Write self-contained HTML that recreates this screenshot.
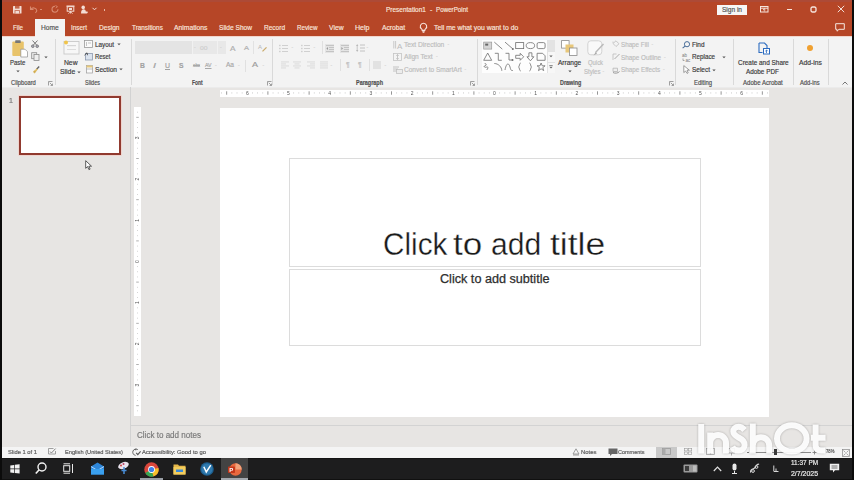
<!DOCTYPE html>
<html><head><meta charset="utf-8">
<style>
*{margin:0;padding:0;box-sizing:border-box}
html,body{width:854px;height:480px;overflow:hidden;background:#e7e5e3;font-family:"Liberation Sans",sans-serif}
.a{position:absolute;display:block}
.t{position:absolute;white-space:nowrap;line-height:1;transform-origin:0 50%;-webkit-text-stroke:0.18px currentColor}
svg{overflow:visible}
</style></head><body><div id="root" style="position:absolute;left:0;top:0;width:854px;height:480px;overflow:hidden;filter:blur(0.35px)">
<div class="a" style="left:0.00px;top:0.00px;width:854.00px;height:36.00px;background:#b64627;"></div>
<div class="a" style="left:0.00px;top:0.00px;width:854.00px;height:1.60px;background:#ad4a36;"></div>
<div class="a" style="left:35.00px;top:19.00px;width:30.00px;height:18.00px;background:#f3f3f3;"></div>
<div class="a" style="left:0.00px;top:36.00px;width:854.00px;height:50.50px;background:#f3f3f3;"></div>
<div class="a" style="left:0.00px;top:86.50px;width:854.00px;height:1.00px;background:#ebebeb;"></div>
<div class="a" style="left:0.00px;top:36.00px;width:35.00px;height:0.80px;background:#f1d6cd;"></div>
<div class="a" style="left:65.00px;top:36.00px;width:789.00px;height:0.80px;background:#f1d6cd;"></div>
<div class="t" style="left:13.00px;top:24.38px;font-size:7.00px;color:#f8e4dc;transform:scaleX(0.887);">File</div>
<div class="t" style="left:40.70px;top:24.38px;font-size:7.00px;color:#555;transform:scaleX(0.943);">Home</div>
<div class="t" style="left:71.00px;top:24.38px;font-size:7.00px;color:#f8e4dc;transform:scaleX(0.914);">Insert</div>
<div class="t" style="left:98.50px;top:24.38px;font-size:7.00px;color:#f8e4dc;transform:scaleX(0.941);">Design</div>
<div class="t" style="left:131.60px;top:24.38px;font-size:7.00px;color:#f8e4dc;transform:scaleX(0.907);">Transitions</div>
<div class="t" style="left:174.00px;top:24.38px;font-size:7.00px;color:#f8e4dc;transform:scaleX(0.967);">Animations</div>
<div class="t" style="left:219.00px;top:24.38px;font-size:7.00px;color:#f8e4dc;transform:scaleX(0.942);">Slide Show</div>
<div class="t" style="left:263.50px;top:24.38px;font-size:7.00px;color:#f8e4dc;transform:scaleX(0.931);">Record</div>
<div class="t" style="left:296.50px;top:24.38px;font-size:7.00px;color:#f8e4dc;transform:scaleX(0.893);">Review</div>
<div class="t" style="left:329.00px;top:24.38px;font-size:7.00px;color:#f8e4dc;transform:scaleX(0.964);">View</div>
<div class="t" style="left:355.00px;top:24.38px;font-size:7.00px;color:#f8e4dc;transform:scaleX(1.007);">Help</div>
<div class="t" style="left:381.50px;top:24.38px;font-size:7.00px;color:#f8e4dc;transform:scaleX(0.958);">Acrobat</div>
<div class="t" style="left:433.60px;top:24.38px;font-size:7.00px;color:#f8e4dc;transform:scaleX(0.976);">Tell me what you want to do</div>
<div class="t" style="left:386.10px;top:6.38px;font-size:7.00px;color:#f8e4dc;transform:scaleX(0.924);">Presentation1</div>
<div class="t" style="left:430.00px;top:6.38px;font-size:7.00px;color:#f8e4dc;">-</div>
<div class="t" style="left:435.90px;top:6.38px;font-size:7.00px;color:#f8e4dc;transform:scaleX(0.891);">PowerPoint</div>
<svg class="a" style="left:419.00px;top:22.00px;" width="9" height="11" viewBox="0 0 9 11"><path d="M4.5 1.2a3.2 3.2 0 0 0-2 5.7c.5.4.7.9.7 1.5h2.6c0-.6.2-1.1.7-1.5a3.2 3.2 0 0 0-2-5.7z" fill="none" stroke="#f8e4dc" stroke-width="1.1"/><path d="M3.3 9.4h2.4M3.6 10.4h1.8" stroke="#f8e4dc" stroke-width="0.9"/></svg>
<svg class="a" style="left:13.00px;top:5.50px;" width="9" height="8" viewBox="0 0 9 8"><rect x="0" y="0" width="8.5" height="7.5" rx="0.6" fill="#f2dcd4"/><rect x="2" y="0" width="4.5" height="2.6" fill="#c4674c"/><rect x="1.6" y="4.2" width="5.3" height="3.3" fill="#c4674c"/><rect x="2.4" y="5" width="3.7" height="2.5" fill="#f2dcd4"/></svg>
<svg class="a" style="left:29.00px;top:5.00px;" width="9" height="8" viewBox="0 0 9 8"><path d="M1.5 1.5v3h3" fill="none" stroke="#d98a70" stroke-width="1.1"/><path d="M1.8 4.3c1.5-2 5.5-2 6 1.2 0 1-.6 1.8-1.5 2.2" fill="none" stroke="#d98a70" stroke-width="1.1"/></svg>
<div class="a" style="left:40.00px;top:8.50px;width:2.00px;height:0.80px;background:#d98a70;"></div>
<svg class="a" style="left:51.00px;top:5.00px;" width="8" height="8" viewBox="0 0 8 8"><path d="M4 1.2a3 3 0 1 0 3 3" fill="none" stroke="#d98a70" stroke-width="1.1"/><path d="M4.5 0.5l2 1.2-1.8 1.2" fill="none" stroke="#d98a70" stroke-width="0.9"/></svg>
<svg class="a" style="left:66.00px;top:5.00px;" width="9" height="9" viewBox="0 0 9 9"><rect x="0.5" y="0.5" width="8" height="1.2" fill="#f3ddd5"/><rect x="1.2" y="1.7" width="6.6" height="4.5" fill="none" stroke="#f3ddd5" stroke-width="1"/><rect x="3" y="3" width="3" height="2" fill="#f3ddd5"/><path d="M4.5 6.2v2.3M2.5 8.7l2-2 2 2" fill="none" stroke="#f3ddd5" stroke-width="0.9"/></svg>
<svg class="a" style="left:80.00px;top:4.50px;" width="8" height="9" viewBox="0 0 8 9"><circle cx="3.2" cy="2.4" r="1.8" fill="#f3ddd5"/><path d="M1 8.5c0-3 1.2-4.3 2.6-4.3 1.6 0 2.2 1.2 2.2 2.2h1.5c.6 0 .7 1 .2 1.6-.4.5-1 .5-1.6.5z" fill="#f3ddd5"/></svg>
<svg class="a" style="left:91.50px;top:7.00px;" width="5" height="4" viewBox="0 0 5 4"><path d="M0.5 0.8l2 2 2-2" fill="none" stroke="#f3ddd5" stroke-width="1"/></svg>
<div class="a" style="left:103.50px;top:9.00px;width:1.50px;height:1.50px;background:#e9b6a4;"></div>
<div class="a" style="left:717.00px;top:4.50px;width:30.00px;height:10.00px;background:#f6f6f6;"></div>
<div class="t" style="left:722.00px;top:6.88px;font-size:6.80px;color:#555;transform:scaleX(0.962);">Sign in</div>
<svg class="a" style="left:759.50px;top:6.00px;" width="8.5" height="6.5" viewBox="0 0 8.5 6.5"><rect x="0.5" y="0.5" width="7.5" height="5.5" fill="none" stroke="#f6e6df" stroke-width="1"/><path d="M0.5 2.2h7.5" stroke="#f6e6df" stroke-width="1"/><path d="M4.25 2.5v3M3 3.9l1.25-1.2 1.25 1.2" fill="none" stroke="#f6e6df" stroke-width="0.8"/></svg>
<div class="a" style="left:786.50px;top:8.50px;width:5.50px;height:0.90px;background:#f6e6df;"></div>
<svg class="a" style="left:810.00px;top:5.50px;" width="7" height="7" viewBox="0 0 7 7"><rect x="1" y="1" width="5" height="5" rx="1.5" fill="none" stroke="#f6e6df" stroke-width="1.3"/></svg>
<svg class="a" style="left:837.00px;top:5.00px;" width="8" height="8" viewBox="0 0 8 8"><path d="M0.8 0.8l6.4 6.4M7.2 0.8L0.8 7.2" stroke="#f6e6df" stroke-width="0.95"/></svg>
<svg class="a" style="left:834.50px;top:23.00px;" width="10" height="9" viewBox="0 0 10 9"><path d="M0.7 0.7h8.6v5.6H4L2 8.2V6.3H0.7z" fill="none" stroke="#f6e6df" stroke-width="1"/></svg>
<div class="a" style="left:54.50px;top:38.50px;width:1.00px;height:46.50px;background:#d9d9d9;"></div>
<div class="a" style="left:130.60px;top:38.50px;width:1.00px;height:46.50px;background:#d9d9d9;"></div>
<div class="a" style="left:272.20px;top:38.50px;width:1.00px;height:46.50px;background:#d9d9d9;"></div>
<div class="a" style="left:476.50px;top:38.50px;width:1.00px;height:46.50px;background:#d9d9d9;"></div>
<div class="a" style="left:674.80px;top:38.50px;width:1.00px;height:46.50px;background:#d9d9d9;"></div>
<div class="a" style="left:732.70px;top:38.50px;width:1.00px;height:46.50px;background:#d9d9d9;"></div>
<div class="a" style="left:793.40px;top:38.50px;width:1.00px;height:46.50px;background:#d9d9d9;"></div>
<div class="a" style="left:827.60px;top:38.50px;width:1.00px;height:46.50px;background:#d9d9d9;"></div>
<div class="t" style="left:11.20px;top:79.88px;font-size:6.80px;color:#505050;transform:scaleX(0.852);">Clipboard</div>
<div class="t" style="left:85.00px;top:79.88px;font-size:6.80px;color:#505050;transform:scaleX(0.810);">Slides</div>
<div class="t" style="left:191.50px;top:79.88px;font-size:6.80px;color:#505050;font-weight:bold;transform:scaleX(0.713);">Font</div>
<div class="t" style="left:356.00px;top:79.88px;font-size:6.80px;color:#505050;font-weight:bold;transform:scaleX(0.803);">Paragraph</div>
<div class="t" style="left:560.00px;top:79.88px;font-size:6.80px;color:#505050;font-weight:bold;transform:scaleX(0.798);">Drawing</div>
<div class="t" style="left:694.30px;top:79.88px;font-size:6.80px;color:#505050;transform:scaleX(0.866);">Editing</div>
<div class="t" style="left:742.50px;top:79.88px;font-size:6.80px;color:#505050;transform:scaleX(0.892);">Adobe Acrobat</div>
<div class="t" style="left:800.40px;top:79.88px;font-size:6.80px;color:#505050;transform:scaleX(0.850);">Add-ins</div>
<svg class="a" style="left:48.00px;top:80.50px;" width="5" height="5" viewBox="0 0 5 5"><path d="M0.5 4.5V0.5h4" fill="none" stroke="#8a8a8a" stroke-width="0.8"/><path d="M1.8 1.8l2.6 2.6M2.6 4.5h1.9V2.6" fill="none" stroke="#8a8a8a" stroke-width="0.8"/></svg>
<svg class="a" style="left:267.00px;top:80.50px;" width="5" height="5" viewBox="0 0 5 5"><path d="M0.5 4.5V0.5h4" fill="none" stroke="#8a8a8a" stroke-width="0.8"/><path d="M1.8 1.8l2.6 2.6M2.6 4.5h1.9V2.6" fill="none" stroke="#8a8a8a" stroke-width="0.8"/></svg>
<svg class="a" style="left:470.00px;top:80.50px;" width="5" height="5" viewBox="0 0 5 5"><path d="M0.5 4.5V0.5h4" fill="none" stroke="#8a8a8a" stroke-width="0.8"/><path d="M1.8 1.8l2.6 2.6M2.6 4.5h1.9V2.6" fill="none" stroke="#8a8a8a" stroke-width="0.8"/></svg>
<svg class="a" style="left:668.50px;top:80.50px;" width="5" height="5" viewBox="0 0 5 5"><path d="M0.5 4.5V0.5h4" fill="none" stroke="#8a8a8a" stroke-width="0.8"/><path d="M1.8 1.8l2.6 2.6M2.6 4.5h1.9V2.6" fill="none" stroke="#8a8a8a" stroke-width="0.8"/></svg>
<svg class="a" style="left:841.50px;top:81.00px;" width="6" height="4" viewBox="0 0 6 4"><path d="M0.5 3.5l2.5-2.5 2.5 2.5" fill="none" stroke="#666" stroke-width="0.9"/></svg>
<svg class="a" style="left:11.00px;top:39.00px;" width="17" height="19" viewBox="0 0 17 19"><rect x="1.3" y="2.5" width="11.5" height="14.5" rx="1" fill="#e8c36a"/><rect x="4.2" y="1.2" width="5.5" height="2.8" rx="0.6" fill="#777"/><path d="M9.8 10.2h4.2l2.5 2.5v5.3H9.8z" fill="#fff" stroke="#8f8f8f" stroke-width="0.7"/></svg>
<div class="t" style="left:10.00px;top:59.28px;font-size:7.00px;color:#3c3c3c;transform:scaleX(0.849);">Paste</div>
<svg class="a" style="left:15.50px;top:69.50px;" width="4" height="3" viewBox="0 0 4 3"><path d="M0.3 0.5l1.7 1.8 1.7-1.8" fill="#555"/></svg>
<svg class="a" style="left:31.00px;top:39.50px;" width="8" height="8" viewBox="0 0 8 8"><path d="M1.5 0.5l4.5 5M6.5 0.5l-4.5 5" stroke="#777" stroke-width="1"/><circle cx="1.8" cy="6.2" r="1.3" fill="#aab" stroke="#777" stroke-width="0.9"/><circle cx="6.2" cy="6.2" r="1.3" fill="#aab" stroke="#777" stroke-width="0.9"/></svg>
<svg class="a" style="left:31.00px;top:52.00px;" width="9" height="9" viewBox="0 0 9 9"><rect x="0.7" y="0.7" width="5" height="6" fill="#e9e9e9" stroke="#8d8d8d" stroke-width="0.8"/><rect x="3" y="2.5" width="5" height="6" fill="#eee" stroke="#8d8d8d" stroke-width="0.8"/></svg>
<svg class="a" style="left:44.00px;top:55.50px;" width="4" height="3" viewBox="0 0 4 3"><path d="M0.3 0.5l1.7 1.8 1.7-1.8" fill="#555"/></svg>
<svg class="a" style="left:32.00px;top:65.50px;" width="8" height="8" viewBox="0 0 8 8"><path d="M7.2 0.6L4.6 3.2" stroke="#666" stroke-width="1.4"/><path d="M4.8 2.4L1 5.6 2.6 7.4 5.8 3.6z" fill="#e0bd62"/><path d="M1.6 6.2l1.2-1M2.4 6.8l1.2-1" stroke="#b08a3a" stroke-width="0.5"/></svg>
<svg class="a" style="left:62.50px;top:40.00px;" width="17" height="15" viewBox="0 0 17 15"><rect x="1" y="1.5" width="15" height="12.5" fill="#f7f7f7" stroke="#c9c9c9" stroke-width="0.9"/><rect x="4" y="5" width="9" height="1.2" fill="#d5d5d5"/><rect x="4" y="9" width="9" height="1" fill="#dcdcdc"/><circle cx="3" cy="2.5" r="2" fill="#f0c44a"/></svg>
<div class="t" style="left:64.00px;top:59.08px;font-size:7.00px;color:#3c3c3c;transform:scaleX(0.964);">New</div>
<div class="t" style="left:60.00px;top:67.88px;font-size:7.00px;color:#3c3c3c;transform:scaleX(0.976);">Slide</div>
<svg class="a" style="left:76.80px;top:70.50px;" width="4" height="3" viewBox="0 0 4 3"><path d="M0.3 0.5l1.7 1.8 1.7-1.8" fill="#555"/></svg>
<svg class="a" style="left:84.00px;top:40.00px;" width="9" height="8" viewBox="0 0 9 8"><rect x="0.5" y="0.5" width="8" height="7" fill="#fafafa" stroke="#9a9a9a" stroke-width="0.8"/><path d="M2.5 2v4M4 3h3" stroke="#aaa" stroke-width="0.7"/></svg>
<div class="t" style="left:95.00px;top:40.78px;font-size:7.00px;color:#3c3c3c;transform:scaleX(0.904);">Layout</div>
<svg class="a" style="left:116.80px;top:43.30px;" width="4" height="3" viewBox="0 0 4 3"><path d="M0.3 0.5l1.7 1.8 1.7-1.8" fill="#555"/></svg>
<svg class="a" style="left:84.00px;top:52.00px;" width="9" height="8.5" viewBox="0 0 9 8.5"><rect x="1.5" y="1.5" width="7" height="6.5" fill="#dbe3ee" stroke="#8a98ae" stroke-width="0.8"/><path d="M0.5 3.2L3 .8l.5 2.4" fill="none" stroke="#444" stroke-width="0.9"/></svg>
<div class="t" style="left:95.00px;top:53.38px;font-size:7.00px;color:#3c3c3c;transform:scaleX(0.848);">Reset</div>
<svg class="a" style="left:85.50px;top:65.00px;" width="7" height="8.5" viewBox="0 0 7 8.5"><rect x="0.5" y="0.5" width="6" height="7.5" fill="#fafafa" stroke="#a5a5a5" stroke-width="0.8"/><rect x="0.5" y="0.5" width="6" height="2" fill="#e6c77a"/><path d="M0.5 4h6" stroke="#a5a5a5" stroke-width="0.7"/></svg>
<div class="t" style="left:95.00px;top:65.88px;font-size:7.00px;color:#3c3c3c;transform:scaleX(0.942);">Section</div>
<svg class="a" style="left:119.00px;top:68.30px;" width="4" height="3" viewBox="0 0 4 3"><path d="M0.3 0.5l1.7 1.8 1.7-1.8" fill="#555"/></svg>
<div class="a" style="left:135.00px;top:41.30px;width:56.50px;height:13.00px;background:#e4e4e4;"></div>
<div class="a" style="left:191.50px;top:41.30px;width:34.20px;height:13.00px;background:#e8e8e8;"></div>
<div class="a" style="left:191.50px;top:41.30px;width:1.00px;height:13.00px;background:#f1f1f1;"></div>
<div class="a" style="left:217.00px;top:41.30px;width:1.00px;height:13.00px;background:#f1f1f1;"></div>
<div class="t" style="left:194.00px;top:45.06px;font-size:5.00px;color:#c8c8c8;">-</div>
<div class="t" style="left:200.00px;top:44.87px;font-size:6.00px;color:#cfcfcf;transform:scaleX(1.124);">00</div>
<div class="t" style="left:220.00px;top:45.06px;font-size:5.00px;color:#c8c8c8;">-</div>
<div class="t" style="left:229.50px;top:45.08px;font-size:7.00px;color:#b0b0b0;transform:scaleX(1.178);">A</div>
<div class="t" style="left:243.50px;top:45.47px;font-size:6.20px;color:#b0b0b0;transform:scaleX(1.209);">A</div>
<svg class="a" style="left:258.00px;top:43.00px;" width="9" height="9" viewBox="0 0 9 9"><text x="0" y="6" font-size="6" fill="#b5b5b5" font-family="Liberation Sans">A</text><path d="M4.5 8.3l4-4" stroke="#c9a96a" stroke-width="1.2"/></svg>
<div class="a" style="left:253.00px;top:41.00px;width:1.00px;height:13.00px;background:#e2e2e2;"></div>
<div class="t" style="left:140.00px;top:61.58px;font-size:7.00px;color:#a2a2a2;transform:scaleX(0.964);font-weight:bold;">B</div>
<div class="t" style="left:152.50px;top:61.58px;font-size:7.00px;color:#a2a2a2;transform:scaleX(1.543);font-style:italic;">I</div>
<div class="t" style="left:165.00px;top:61.58px;font-size:7.00px;color:#a2a2a2;transform:scaleX(0.989);text-decoration:underline;">U</div>
<div class="t" style="left:179.00px;top:61.58px;font-size:7.00px;color:#a2a2a2;transform:scaleX(0.964);font-weight:bold;">S</div>
<div class="t" style="left:192.50px;top:63.06px;font-size:5.00px;color:#a8a8a8;transform:scaleX(0.868);text-decoration:line-through;">abc</div>
<div class="t" style="left:204.50px;top:61.57px;font-size:6.00px;color:#a8a8a8;transform:scaleX(0.860);text-decoration:underline;">AV</div>
<div class="t" style="left:215.00px;top:62.56px;font-size:5.00px;color:#c8c8c8;">-</div>
<div class="t" style="left:225.50px;top:61.82px;font-size:6.50px;color:#a8a8a8;transform:scaleX(1.006);">Aa</div>
<div class="t" style="left:238.00px;top:62.56px;font-size:5.00px;color:#c8c8c8;">-</div>
<div class="a" style="left:245.00px;top:59.50px;width:1.00px;height:12.00px;background:#e0e0e0;"></div>
<div class="t" style="left:251.50px;top:60.84px;font-size:7.50px;color:#9c9c9c;transform:scaleX(1.199);">A</div>
<div class="t" style="left:262.50px;top:62.56px;font-size:5.00px;color:#c8c8c8;">-</div>
<svg class="a" style="left:279.00px;top:43.50px;" width="9" height="8" viewBox="0 0 9 8"><rect x="0" y="0.8" width="1.6" height="1.4" fill="#d0d0d0"/><rect x="3" y="1" width="6" height="1" fill="#d0d0d0"/><rect x="0" y="3.8" width="1.6" height="1.4" fill="#d0d0d0"/><rect x="3" y="4" width="6" height="1" fill="#d0d0d0"/><rect x="0" y="6.8" width="1.6" height="1.4" fill="#d0d0d0"/><rect x="3" y="7" width="6" height="1" fill="#d0d0d0"/></svg>
<div class="t" style="left:291.50px;top:45.06px;font-size:5.00px;color:#c8c8c8;">-</div>
<svg class="a" style="left:301.00px;top:43.50px;" width="9" height="8" viewBox="0 0 9 8"><rect x="0" y="0.8" width="1.6" height="1.4" fill="#d0d0d0"/><rect x="3" y="1" width="6" height="1" fill="#d0d0d0"/><rect x="0" y="3.8" width="1.6" height="1.4" fill="#d0d0d0"/><rect x="3" y="4" width="6" height="1" fill="#d0d0d0"/><rect x="0" y="6.8" width="1.6" height="1.4" fill="#d0d0d0"/><rect x="3" y="7" width="6" height="1" fill="#d0d0d0"/></svg>
<div class="t" style="left:313.50px;top:45.06px;font-size:5.00px;color:#c8c8c8;">-</div>
<div class="a" style="left:322.00px;top:41.00px;width:1.00px;height:13.00px;background:#e0e0e0;"></div>
<div class="a" style="left:324.50px;top:43.50px;width:9.50px;height:9.00px;background:#e4e4e4;"></div>
<div class="a" style="left:339.50px;top:43.50px;width:9.50px;height:9.00px;background:#e4e4e4;"></div>
<svg class="a" style="left:325.50px;top:44.50px;" width="8" height="7" viewBox="0 0 8 7"><path d="M0 0.5h8M3 2.5h5M3 4.5h5M0 6.5h8" stroke="#c0c0c0" stroke-width="0.9"/><path d="M2 2l-1.6 1.5L2 5" fill="#999"/></svg>
<svg class="a" style="left:340.50px;top:44.50px;" width="8" height="7" viewBox="0 0 8 7"><path d="M0 0.5h8M3 2.5h5M3 4.5h5M0 6.5h8" stroke="#c0c0c0" stroke-width="0.9"/><path d="M0.4 2L2 3.5.4 5" fill="#999"/></svg>
<svg class="a" style="left:356.00px;top:43.50px;" width="9" height="8" viewBox="0 0 9 8"><path d="M1.2 0.3l1.2 1.5H0z M1.2 7.7l1.2-1.5H0z" fill="#aaa"/><path d="M1.2 1.5v5" stroke="#aaa" stroke-width="0.6"/><path d="M4 1h5M4 4h5M4 7h5" stroke="#c2c2c2" stroke-width="1"/></svg>
<div class="t" style="left:366.50px;top:45.06px;font-size:5.00px;color:#c8c8c8;">-</div>
<svg class="a" style="left:281.00px;top:61.00px;" width="8" height="8" viewBox="0 0 8 8"><rect x="0" y="0.5" width="8" height="0.9" fill="#d8d8d8"/><rect x="0" y="2.5" width="5" height="0.9" fill="#d8d8d8"/><rect x="0" y="4.5" width="8" height="0.9" fill="#d8d8d8"/><rect x="0" y="6.5" width="5" height="0.9" fill="#d8d8d8"/></svg>
<svg class="a" style="left:293.00px;top:61.00px;" width="8" height="8" viewBox="0 0 8 8"><rect x="0.0" y="0.5" width="8" height="0.9" fill="#d8d8d8"/><rect x="1.5" y="2.5" width="5" height="0.9" fill="#d8d8d8"/><rect x="0.0" y="4.5" width="8" height="0.9" fill="#d8d8d8"/><rect x="1.5" y="6.5" width="5" height="0.9" fill="#d8d8d8"/></svg>
<svg class="a" style="left:307.00px;top:61.00px;" width="8" height="8" viewBox="0 0 8 8"><rect x="0" y="0.5" width="8" height="0.9" fill="#d8d8d8"/><rect x="3" y="2.5" width="5" height="0.9" fill="#d8d8d8"/><rect x="0" y="4.5" width="8" height="0.9" fill="#d8d8d8"/><rect x="3" y="6.5" width="5" height="0.9" fill="#d8d8d8"/></svg>
<svg class="a" style="left:320.00px;top:61.00px;" width="8" height="8" viewBox="0 0 8 8"><rect x="0" y="0.5" width="8" height="0.9" fill="#d8d8d8"/><rect x="0" y="2.5" width="8" height="0.9" fill="#d8d8d8"/><rect x="0" y="4.5" width="8" height="0.9" fill="#d8d8d8"/><rect x="0" y="6.5" width="8" height="0.9" fill="#d8d8d8"/></svg>
<div class="t" style="left:330.50px;top:62.56px;font-size:5.00px;color:#c8c8c8;">-</div>
<div class="a" style="left:339.50px;top:59.00px;width:1.00px;height:12.00px;background:#e0e0e0;"></div>
<div class="t" style="left:346.00px;top:61.82px;font-size:6.50px;color:#c0c0c0;">¶</div>
<div class="t" style="left:358.00px;top:61.82px;font-size:6.50px;color:#c0c0c0;">¶</div>
<div class="a" style="left:369.00px;top:59.00px;width:1.00px;height:12.00px;background:#e0e0e0;"></div>
<div class="a" style="left:373.00px;top:61.00px;width:8.00px;height:8.00px;background:#e2e2e2;"></div>
<div class="t" style="left:384.50px;top:62.56px;font-size:5.00px;color:#c8c8c8;">-</div>
<svg class="a" style="left:393.00px;top:39.50px;" width="9" height="9" viewBox="0 0 9 9"><path d="M0.8 1v7.5M2.6 1v7.5" stroke="#c4c4c4" stroke-width="0.9"/><text x="4" y="8.5" font-size="8" fill="#bbb" font-family="Liberation Sans">A</text></svg>
<div class="t" style="left:404.30px;top:40.68px;font-size:7.00px;color:#bdbdbd;transform:scaleX(0.950);">Text Direction</div>
<div class="t" style="left:447.50px;top:41.66px;font-size:5.00px;color:#c8c8c8;">-</div>
<svg class="a" style="left:393.00px;top:52.50px;" width="9" height="8" viewBox="0 0 9 8"><rect x="0.5" y="0.5" width="8" height="7" fill="none" stroke="#c4c4c4" stroke-width="0.8"/><path d="M4.5 1.5v5M3.3 2.8l1.2-1.2 1.2 1.2M3.3 5.2l1.2 1.2 1.2-1.2" fill="none" stroke="#b0b0b0" stroke-width="0.7"/></svg>
<div class="t" style="left:404.30px;top:53.28px;font-size:7.00px;color:#bdbdbd;transform:scaleX(0.950);">Align Text</div>
<div class="t" style="left:436.00px;top:54.26px;font-size:5.00px;color:#c8c8c8;">-</div>
<svg class="a" style="left:393.00px;top:65.50px;" width="10" height="8" viewBox="0 0 10 8"><path d="M0 1h6M0 3h5M0 5h4" stroke="#bdbdbd" stroke-width="0.9"/><rect x="3.5" y="3.5" width="6" height="4" fill="#ececec" stroke="#bdbdbd" stroke-width="0.7"/></svg>
<div class="t" style="left:404.30px;top:66.08px;font-size:7.00px;color:#bdbdbd;transform:scaleX(0.933);">Convert to SmartArt</div>
<div class="t" style="left:464.50px;top:67.06px;font-size:5.00px;color:#c8c8c8;">-</div>
<div class="a" style="left:482.30px;top:40.00px;width:64.70px;height:33.10px;background:#fdfdfd;"></div>
<div class="a" style="left:547.00px;top:40.00px;width:8.40px;height:33.10px;background:#f7f7f7;border-left:1px solid #e2e2e2;"></div>
<div class="a" style="left:547.50px;top:40.00px;width:7.90px;height:10.50px;background:#e3e3e3;"></div>
<div class="a" style="left:547.50px;top:61.50px;width:7.90px;height:0.80px;background:#e2e2e2;"></div>
<div class="a" style="left:547.50px;top:50.50px;width:7.90px;height:0.80px;background:#e2e2e2;"></div>
<svg class="a" style="left:549.00px;top:54.50px;" width="4" height="3" viewBox="0 0 4 3"><path d="M0.3 0.5l1.7 1.8 1.7-1.8" fill="#666"/></svg>
<svg class="a" style="left:549.00px;top:65.00px;" width="4" height="5" viewBox="0 0 4 5"><path d="M0.3 0.5h3.4" stroke="#666" stroke-width="0.7"/><path d="M0.3 1.8l1.7 1.8 1.7-1.8" fill="#666"/></svg>
<svg class="a" style="left:482.30px;top:40.00px;" width="65" height="34" viewBox="0 0 65 34"><g transform="translate(5.70 5.60)"><rect x="-4" y="-3.5" width="8" height="7" fill="#d5d5d5" stroke="#999" stroke-width="0.7"/><rect x="-2.5" y="-2" width="3" height="2" fill="#666"/></g><g transform="translate(16.30 5.60)"><path d="M-4 -3.5L4 3.5" stroke="#6d6d6d" stroke-width="0.8"/></g><g transform="translate(27.00 5.60)"><path d="M-4 -3.5L3.5 3" stroke="#6d6d6d" stroke-width="0.8"/><circle cx="3.8" cy="3.3" r="1" fill="#6d6d6d"/></g><g transform="translate(37.70 5.60)"><rect x="-4" y="-3" width="8" height="6" fill="none" stroke="#6d6d6d" stroke-width="0.8"/></g><g transform="translate(48.40 5.60)"><ellipse cx="0" cy="0" rx="4.2" ry="3" fill="none" stroke="#6d6d6d" stroke-width="0.8"/></g><g transform="translate(59.10 5.60)"><rect x="-4" y="-3" width="8" height="6" rx="1.5" fill="none" stroke="#6d6d6d" stroke-width="0.8"/></g><g transform="translate(5.70 16.80)"><path d="M0 -3.8L4 3.5H-4z" fill="none" stroke="#6d6d6d" stroke-width="0.8"/></g><g transform="translate(16.30 16.80)"><path d="M-3.5 -3.5H0V3.5H3.5" fill="none" stroke="#6d6d6d" stroke-width="0.8"/></g><g transform="translate(27.00 16.80)"><path d="M-3.5 -3.5H0V3.2H3" fill="none" stroke="#6d6d6d" stroke-width="0.8"/><circle cx="3.5" cy="3.2" r="1" fill="#6d6d6d"/></g><g transform="translate(37.70 16.80)"><path d="M-4 -1.5H0.5V-3.5L4 0 0.5 3.5V1.5H-4z" fill="none" stroke="#6d6d6d" stroke-width="0.8"/></g><g transform="translate(48.40 16.80)"><path d="M-1.5 -4H1.5V0H3.5L0 4 -3.5 0H-1.5z" fill="none" stroke="#6d6d6d" stroke-width="0.8"/></g><g transform="translate(59.10 16.80)"><path d="M-4 -3.5H1.5L4 -1V3.5H-4z" fill="none" stroke="#6d6d6d" stroke-width="0.8"/></g><g transform="translate(5.70 27.00)"><path d="M-3 -3.5c2 0 2 2 0 2.5s1 2 2 1 2 1 0 3" fill="none" stroke="#6d6d6d" stroke-width="0.8"/></g><g transform="translate(16.30 27.00)"><path d="M-4 -3.5C0 -3.5 3.5 0 3.5 3.8" fill="none" stroke="#6d6d6d" stroke-width="0.8"/></g><g transform="translate(27.00 27.00)"><path d="M-4 3C-2.5 -5 0 -4 1 0s1.5 3.5 3 3.5" fill="none" stroke="#6d6d6d" stroke-width="0.8"/></g><g transform="translate(37.70 27.00)"><path d="M1 -4C-0.5 -4 0 -0.5 -1.2 0 0 0.5-0.5 4 1 4" fill="none" stroke="#6d6d6d" stroke-width="0.8"/></g><g transform="translate(48.40 27.00)"><path d="M-1 -4C0.5 -4 0 -0.5 1.2 0 0 0.5 0.5 4-1 4" fill="none" stroke="#6d6d6d" stroke-width="0.8"/></g><g transform="translate(59.10 27.00)"><path d="M0 -4L1.1 -1.2H4L1.7 0.6 2.6 3.6 0 1.8-2.6 3.6-1.7 0.6-4-1.2H-1.1z" fill="none" stroke="#6d6d6d" stroke-width="0.8"/></g></svg>
<svg class="a" style="left:561.00px;top:40.00px;" width="17" height="16" viewBox="0 0 17 16"><rect x="0.6" y="0.6" width="7.5" height="7.5" fill="#fff" stroke="#8a8a8a" stroke-width="0.8"/><rect x="4.5" y="4.5" width="8" height="8" fill="#e8c77a"/><rect x="8.5" y="8" width="7.5" height="7.5" fill="#fff" stroke="#8a8a8a" stroke-width="0.8"/></svg>
<div class="t" style="left:558.20px;top:59.28px;font-size:7.00px;color:#3c3c3c;transform:scaleX(0.932);">Arrange</div>
<svg class="a" style="left:567.50px;top:69.50px;" width="4" height="3" viewBox="0 0 4 3"><path d="M0.3 0.5l1.7 1.8 1.7-1.8" fill="#555"/></svg>
<svg class="a" style="left:587.00px;top:40.00px;" width="18" height="17" viewBox="0 0 18 17"><rect x="0.8" y="0.8" width="14" height="14" rx="3" fill="#f9f9f9" stroke="#cfcfcf" stroke-width="0.9"/><path d="M16.5 4L8.5 12.5" stroke="#b9b9b9" stroke-width="1.4"/><path d="M8.8 12L6.5 15.5 10 13.5z" fill="#aaa"/></svg>
<div class="t" style="left:588.00px;top:59.28px;font-size:7.00px;color:#bdbdbd;transform:scaleX(0.838);">Quick</div>
<div class="t" style="left:584.00px;top:67.88px;font-size:7.00px;color:#bdbdbd;transform:scaleX(0.866);">Styles</div>
<div class="t" style="left:602.50px;top:68.56px;font-size:5.00px;color:#c8c8c8;">-</div>
<svg class="a" style="left:611.50px;top:39.50px;" width="8" height="7" viewBox="0 0 8 7"><path d="M1 3.5L4 0.8 7 3.8 4 6.5z" fill="none" stroke="#bbb" stroke-width="0.8"/><path d="M1 1.5v1.5" stroke="#bbb" stroke-width="0.7"/></svg>
<div class="t" style="left:620.90px;top:40.68px;font-size:7.00px;color:#bdbdbd;transform:scaleX(0.893);">Shape Fill</div>
<div class="t" style="left:651.50px;top:41.66px;font-size:5.00px;color:#c8c8c8;">-</div>
<svg class="a" style="left:611.50px;top:52.50px;" width="8" height="8" viewBox="0 0 8 8"><path d="M1 7V1h3.5" fill="none" stroke="#bbb" stroke-width="0.8"/><path d="M2.5 6l5-5" stroke="#aaa" stroke-width="1"/></svg>
<div class="t" style="left:620.90px;top:53.58px;font-size:7.00px;color:#bdbdbd;transform:scaleX(0.904);">Shape Outline</div>
<div class="t" style="left:664.00px;top:54.56px;font-size:5.00px;color:#c8c8c8;">-</div>
<svg class="a" style="left:611.50px;top:65.50px;" width="8" height="8" viewBox="0 0 8 8"><path d="M1 5.5V2.2h4.5v3.3z" fill="#eee" stroke="#b5b5b5" stroke-width="0.8"/><path d="M1 6.5c1.5 1 5 1 6.5-1" fill="none" stroke="#999" stroke-width="1"/></svg>
<div class="t" style="left:620.90px;top:66.28px;font-size:7.00px;color:#bdbdbd;transform:scaleX(0.900);">Shape Effects</div>
<div class="t" style="left:663.00px;top:67.26px;font-size:5.00px;color:#c8c8c8;">-</div>
<svg class="a" style="left:681.50px;top:40.50px;" width="8.5" height="7.5" viewBox="0 0 8.5 7.5"><circle cx="5" cy="3.2" r="2.6" fill="none" stroke="#4a6e9a" stroke-width="1"/><path d="M3.1 5.1L0.6 7.2" stroke="#4a6e9a" stroke-width="1.1"/></svg>
<div class="t" style="left:691.80px;top:40.58px;font-size:7.00px;color:#3c3c3c;transform:scaleX(0.918);">Find</div>
<svg class="a" style="left:681.50px;top:52.50px;" width="9" height="9" viewBox="0 0 9 9"><text x="0" y="4.2" font-size="4.5" fill="#777" font-family="Liberation Sans">ab</text><text x="3.5" y="8.6" font-size="4.5" fill="#777" font-family="Liberation Sans">ac</text><path d="M1 5.5v2h1.5" fill="none" stroke="#777" stroke-width="0.6"/></svg>
<div class="t" style="left:692.00px;top:53.38px;font-size:7.00px;color:#3c3c3c;transform:scaleX(0.896);">Replace</div>
<svg class="a" style="left:721.50px;top:55.80px;" width="4" height="3" viewBox="0 0 4 3"><path d="M0.3 0.5l1.7 1.8 1.7-1.8" fill="#555"/></svg>
<svg class="a" style="left:682.50px;top:65.00px;" width="7" height="9" viewBox="0 0 7 9"><path d="M0.8 0.6v7l1.8-1.6L4 8.4l1.2-.6L4 5.2h2.4z" fill="#fff" stroke="#777" stroke-width="0.7"/></svg>
<div class="t" style="left:692.00px;top:66.08px;font-size:7.00px;color:#3c3c3c;transform:scaleX(0.925);">Select</div>
<svg class="a" style="left:712.00px;top:68.50px;" width="4" height="3" viewBox="0 0 4 3"><path d="M0.3 0.5l1.7 1.8 1.7-1.8" fill="#555"/></svg>
<svg class="a" style="left:757.50px;top:42.00px;" width="12" height="13" viewBox="0 0 12 13"><path d="M1 1h5.5l2.5 2.5V7" fill="none" stroke="#2d6cc0" stroke-width="1.1"/><path d="M1 1v9.5h3.5" fill="none" stroke="#2d6cc0" stroke-width="1.1"/><rect x="5.5" y="6.5" width="6" height="5.5" fill="#fff" stroke="#2d6cc0" stroke-width="1"/><path d="M8.5 11V8M7.3 9.2L8.5 8 9.7 9.2" fill="none" stroke="#2d6cc0" stroke-width="0.8"/></svg>
<div class="t" style="left:737.50px;top:59.28px;font-size:7.00px;color:#3c3c3c;transform:scaleX(0.917);">Create and Share</div>
<div class="t" style="left:746.30px;top:67.88px;font-size:7.00px;color:#3c3c3c;transform:scaleX(0.909);">Adobe PDF</div>
<div class="a" style="left:807px;top:44.5px;width:6px;height:6px;border-radius:50%;background:#f0a030"></div>
<div class="t" style="left:799.00px;top:59.28px;font-size:7.00px;color:#3c3c3c;transform:scaleX(0.961);">Add-ins</div>
<div class="a" style="left:220.00px;top:89.50px;width:549.00px;height:7.00px;background:#ffffff;"></div>
<svg class="a" style="left:220.00px;top:89.00px;" width="549" height="8" viewBox="0 0 549 8"><text x="27.30" y="6" font-size="5" fill="#555" text-anchor="middle" font-family="Liberation Sans">6</text><text x="68.50" y="6" font-size="5" fill="#555" text-anchor="middle" font-family="Liberation Sans">5</text><text x="109.70" y="6" font-size="5" fill="#555" text-anchor="middle" font-family="Liberation Sans">4</text><text x="150.90" y="6" font-size="5" fill="#555" text-anchor="middle" font-family="Liberation Sans">3</text><text x="192.10" y="6" font-size="5" fill="#555" text-anchor="middle" font-family="Liberation Sans">2</text><text x="233.30" y="6" font-size="5" fill="#555" text-anchor="middle" font-family="Liberation Sans">1</text><text x="274.50" y="6" font-size="5" fill="#555" text-anchor="middle" font-family="Liberation Sans">0</text><text x="315.70" y="6" font-size="5" fill="#555" text-anchor="middle" font-family="Liberation Sans">1</text><text x="356.90" y="6" font-size="5" fill="#555" text-anchor="middle" font-family="Liberation Sans">2</text><text x="398.10" y="6" font-size="5" fill="#555" text-anchor="middle" font-family="Liberation Sans">3</text><text x="439.30" y="6" font-size="5" fill="#555" text-anchor="middle" font-family="Liberation Sans">4</text><text x="480.50" y="6" font-size="5" fill="#555" text-anchor="middle" font-family="Liberation Sans">5</text><text x="521.70" y="6" font-size="5" fill="#555" text-anchor="middle" font-family="Liberation Sans">6</text><rect x="1.15" y="3.5" width="0.8" height="0.9" fill="#b5b5b5"/><rect x="6.25" y="2.3" width="0.9" height="3.4" fill="#8a8a8a"/><rect x="11.45" y="3.5" width="0.8" height="0.9" fill="#b5b5b5"/><rect x="16.60" y="3.5" width="0.8" height="0.9" fill="#b5b5b5"/><rect x="21.75" y="3.5" width="0.8" height="0.9" fill="#b5b5b5"/><rect x="32.05" y="3.5" width="0.8" height="0.9" fill="#b5b5b5"/><rect x="37.20" y="3.5" width="0.8" height="0.9" fill="#b5b5b5"/><rect x="42.35" y="3.5" width="0.8" height="0.9" fill="#b5b5b5"/><rect x="47.45" y="2.3" width="0.9" height="3.4" fill="#8a8a8a"/><rect x="52.65" y="3.5" width="0.8" height="0.9" fill="#b5b5b5"/><rect x="57.80" y="3.5" width="0.8" height="0.9" fill="#b5b5b5"/><rect x="62.95" y="3.5" width="0.8" height="0.9" fill="#b5b5b5"/><rect x="73.25" y="3.5" width="0.8" height="0.9" fill="#b5b5b5"/><rect x="78.40" y="3.5" width="0.8" height="0.9" fill="#b5b5b5"/><rect x="83.55" y="3.5" width="0.8" height="0.9" fill="#b5b5b5"/><rect x="88.65" y="2.3" width="0.9" height="3.4" fill="#8a8a8a"/><rect x="93.85" y="3.5" width="0.8" height="0.9" fill="#b5b5b5"/><rect x="99.00" y="3.5" width="0.8" height="0.9" fill="#b5b5b5"/><rect x="104.15" y="3.5" width="0.8" height="0.9" fill="#b5b5b5"/><rect x="114.45" y="3.5" width="0.8" height="0.9" fill="#b5b5b5"/><rect x="119.60" y="3.5" width="0.8" height="0.9" fill="#b5b5b5"/><rect x="124.75" y="3.5" width="0.8" height="0.9" fill="#b5b5b5"/><rect x="129.85" y="2.3" width="0.9" height="3.4" fill="#8a8a8a"/><rect x="135.05" y="3.5" width="0.8" height="0.9" fill="#b5b5b5"/><rect x="140.20" y="3.5" width="0.8" height="0.9" fill="#b5b5b5"/><rect x="145.35" y="3.5" width="0.8" height="0.9" fill="#b5b5b5"/><rect x="155.65" y="3.5" width="0.8" height="0.9" fill="#b5b5b5"/><rect x="160.80" y="3.5" width="0.8" height="0.9" fill="#b5b5b5"/><rect x="165.95" y="3.5" width="0.8" height="0.9" fill="#b5b5b5"/><rect x="171.05" y="2.3" width="0.9" height="3.4" fill="#8a8a8a"/><rect x="176.25" y="3.5" width="0.8" height="0.9" fill="#b5b5b5"/><rect x="181.40" y="3.5" width="0.8" height="0.9" fill="#b5b5b5"/><rect x="186.55" y="3.5" width="0.8" height="0.9" fill="#b5b5b5"/><rect x="196.85" y="3.5" width="0.8" height="0.9" fill="#b5b5b5"/><rect x="202.00" y="3.5" width="0.8" height="0.9" fill="#b5b5b5"/><rect x="207.15" y="3.5" width="0.8" height="0.9" fill="#b5b5b5"/><rect x="212.25" y="2.3" width="0.9" height="3.4" fill="#8a8a8a"/><rect x="217.45" y="3.5" width="0.8" height="0.9" fill="#b5b5b5"/><rect x="222.60" y="3.5" width="0.8" height="0.9" fill="#b5b5b5"/><rect x="227.75" y="3.5" width="0.8" height="0.9" fill="#b5b5b5"/><rect x="238.05" y="3.5" width="0.8" height="0.9" fill="#b5b5b5"/><rect x="243.20" y="3.5" width="0.8" height="0.9" fill="#b5b5b5"/><rect x="248.35" y="3.5" width="0.8" height="0.9" fill="#b5b5b5"/><rect x="253.45" y="2.3" width="0.9" height="3.4" fill="#8a8a8a"/><rect x="258.65" y="3.5" width="0.8" height="0.9" fill="#b5b5b5"/><rect x="263.80" y="3.5" width="0.8" height="0.9" fill="#b5b5b5"/><rect x="268.95" y="3.5" width="0.8" height="0.9" fill="#b5b5b5"/><rect x="279.25" y="3.5" width="0.8" height="0.9" fill="#b5b5b5"/><rect x="284.40" y="3.5" width="0.8" height="0.9" fill="#b5b5b5"/><rect x="289.55" y="3.5" width="0.8" height="0.9" fill="#b5b5b5"/><rect x="294.65" y="2.3" width="0.9" height="3.4" fill="#8a8a8a"/><rect x="299.85" y="3.5" width="0.8" height="0.9" fill="#b5b5b5"/><rect x="305.00" y="3.5" width="0.8" height="0.9" fill="#b5b5b5"/><rect x="310.15" y="3.5" width="0.8" height="0.9" fill="#b5b5b5"/><rect x="320.45" y="3.5" width="0.8" height="0.9" fill="#b5b5b5"/><rect x="325.60" y="3.5" width="0.8" height="0.9" fill="#b5b5b5"/><rect x="330.75" y="3.5" width="0.8" height="0.9" fill="#b5b5b5"/><rect x="335.85" y="2.3" width="0.9" height="3.4" fill="#8a8a8a"/><rect x="341.05" y="3.5" width="0.8" height="0.9" fill="#b5b5b5"/><rect x="346.20" y="3.5" width="0.8" height="0.9" fill="#b5b5b5"/><rect x="351.35" y="3.5" width="0.8" height="0.9" fill="#b5b5b5"/><rect x="361.65" y="3.5" width="0.8" height="0.9" fill="#b5b5b5"/><rect x="366.80" y="3.5" width="0.8" height="0.9" fill="#b5b5b5"/><rect x="371.95" y="3.5" width="0.8" height="0.9" fill="#b5b5b5"/><rect x="377.05" y="2.3" width="0.9" height="3.4" fill="#8a8a8a"/><rect x="382.25" y="3.5" width="0.8" height="0.9" fill="#b5b5b5"/><rect x="387.40" y="3.5" width="0.8" height="0.9" fill="#b5b5b5"/><rect x="392.55" y="3.5" width="0.8" height="0.9" fill="#b5b5b5"/><rect x="402.85" y="3.5" width="0.8" height="0.9" fill="#b5b5b5"/><rect x="408.00" y="3.5" width="0.8" height="0.9" fill="#b5b5b5"/><rect x="413.15" y="3.5" width="0.8" height="0.9" fill="#b5b5b5"/><rect x="418.25" y="2.3" width="0.9" height="3.4" fill="#8a8a8a"/><rect x="423.45" y="3.5" width="0.8" height="0.9" fill="#b5b5b5"/><rect x="428.60" y="3.5" width="0.8" height="0.9" fill="#b5b5b5"/><rect x="433.75" y="3.5" width="0.8" height="0.9" fill="#b5b5b5"/><rect x="444.05" y="3.5" width="0.8" height="0.9" fill="#b5b5b5"/><rect x="449.20" y="3.5" width="0.8" height="0.9" fill="#b5b5b5"/><rect x="454.35" y="3.5" width="0.8" height="0.9" fill="#b5b5b5"/><rect x="459.45" y="2.3" width="0.9" height="3.4" fill="#8a8a8a"/><rect x="464.65" y="3.5" width="0.8" height="0.9" fill="#b5b5b5"/><rect x="469.80" y="3.5" width="0.8" height="0.9" fill="#b5b5b5"/><rect x="474.95" y="3.5" width="0.8" height="0.9" fill="#b5b5b5"/><rect x="485.25" y="3.5" width="0.8" height="0.9" fill="#b5b5b5"/><rect x="490.40" y="3.5" width="0.8" height="0.9" fill="#b5b5b5"/><rect x="495.55" y="3.5" width="0.8" height="0.9" fill="#b5b5b5"/><rect x="500.65" y="2.3" width="0.9" height="3.4" fill="#8a8a8a"/><rect x="505.85" y="3.5" width="0.8" height="0.9" fill="#b5b5b5"/><rect x="511.00" y="3.5" width="0.8" height="0.9" fill="#b5b5b5"/><rect x="516.15" y="3.5" width="0.8" height="0.9" fill="#b5b5b5"/><rect x="526.45" y="3.5" width="0.8" height="0.9" fill="#b5b5b5"/><rect x="531.60" y="3.5" width="0.8" height="0.9" fill="#b5b5b5"/><rect x="536.75" y="3.5" width="0.8" height="0.9" fill="#b5b5b5"/><rect x="541.85" y="2.3" width="0.9" height="3.4" fill="#8a8a8a"/><rect x="547.05" y="3.5" width="0.8" height="0.9" fill="#b5b5b5"/></svg>
<div class="a" style="left:134.00px;top:107.00px;width:7.00px;height:309.00px;background:#ffffff;"></div>
<svg class="a" style="left:134.00px;top:107.00px;" width="7" height="309" viewBox="0 0 7 309"><text x="3.5" y="32.70" font-size="5" fill="#555" text-anchor="middle" font-family="Liberation Sans" transform="rotate(-90 3.5 30.90)">3</text><text x="3.5" y="73.90" font-size="5" fill="#555" text-anchor="middle" font-family="Liberation Sans" transform="rotate(-90 3.5 72.10)">2</text><text x="3.5" y="115.10" font-size="5" fill="#555" text-anchor="middle" font-family="Liberation Sans" transform="rotate(-90 3.5 113.30)">1</text><text x="3.5" y="156.30" font-size="5" fill="#555" text-anchor="middle" font-family="Liberation Sans" transform="rotate(-90 3.5 154.50)">0</text><text x="3.5" y="197.50" font-size="5" fill="#555" text-anchor="middle" font-family="Liberation Sans" transform="rotate(-90 3.5 195.70)">1</text><text x="3.5" y="238.70" font-size="5" fill="#555" text-anchor="middle" font-family="Liberation Sans" transform="rotate(-90 3.5 236.90)">2</text><text x="3.5" y="279.90" font-size="5" fill="#555" text-anchor="middle" font-family="Liberation Sans" transform="rotate(-90 3.5 278.10)">3</text><rect x="3" y="4.75" width="0.9" height="0.8" fill="#c5c5c5"/><rect x="2.2" y="9.85" width="2.6" height="0.9" fill="#a8a8a8"/><rect x="3" y="15.05" width="0.9" height="0.8" fill="#c5c5c5"/><rect x="3" y="20.20" width="0.9" height="0.8" fill="#c5c5c5"/><rect x="3" y="25.35" width="0.9" height="0.8" fill="#c5c5c5"/><rect x="3" y="35.65" width="0.9" height="0.8" fill="#c5c5c5"/><rect x="3" y="40.80" width="0.9" height="0.8" fill="#c5c5c5"/><rect x="3" y="45.95" width="0.9" height="0.8" fill="#c5c5c5"/><rect x="2.2" y="51.05" width="2.6" height="0.9" fill="#a8a8a8"/><rect x="3" y="56.25" width="0.9" height="0.8" fill="#c5c5c5"/><rect x="3" y="61.40" width="0.9" height="0.8" fill="#c5c5c5"/><rect x="3" y="66.55" width="0.9" height="0.8" fill="#c5c5c5"/><rect x="3" y="76.85" width="0.9" height="0.8" fill="#c5c5c5"/><rect x="3" y="82.00" width="0.9" height="0.8" fill="#c5c5c5"/><rect x="3" y="87.15" width="0.9" height="0.8" fill="#c5c5c5"/><rect x="2.2" y="92.25" width="2.6" height="0.9" fill="#a8a8a8"/><rect x="3" y="97.45" width="0.9" height="0.8" fill="#c5c5c5"/><rect x="3" y="102.60" width="0.9" height="0.8" fill="#c5c5c5"/><rect x="3" y="107.75" width="0.9" height="0.8" fill="#c5c5c5"/><rect x="3" y="118.05" width="0.9" height="0.8" fill="#c5c5c5"/><rect x="3" y="123.20" width="0.9" height="0.8" fill="#c5c5c5"/><rect x="3" y="128.35" width="0.9" height="0.8" fill="#c5c5c5"/><rect x="2.2" y="133.45" width="2.6" height="0.9" fill="#a8a8a8"/><rect x="3" y="138.65" width="0.9" height="0.8" fill="#c5c5c5"/><rect x="3" y="143.80" width="0.9" height="0.8" fill="#c5c5c5"/><rect x="3" y="148.95" width="0.9" height="0.8" fill="#c5c5c5"/><rect x="3" y="159.25" width="0.9" height="0.8" fill="#c5c5c5"/><rect x="3" y="164.40" width="0.9" height="0.8" fill="#c5c5c5"/><rect x="3" y="169.55" width="0.9" height="0.8" fill="#c5c5c5"/><rect x="2.2" y="174.65" width="2.6" height="0.9" fill="#a8a8a8"/><rect x="3" y="179.85" width="0.9" height="0.8" fill="#c5c5c5"/><rect x="3" y="185.00" width="0.9" height="0.8" fill="#c5c5c5"/><rect x="3" y="190.15" width="0.9" height="0.8" fill="#c5c5c5"/><rect x="3" y="200.45" width="0.9" height="0.8" fill="#c5c5c5"/><rect x="3" y="205.60" width="0.9" height="0.8" fill="#c5c5c5"/><rect x="3" y="210.75" width="0.9" height="0.8" fill="#c5c5c5"/><rect x="2.2" y="215.85" width="2.6" height="0.9" fill="#a8a8a8"/><rect x="3" y="221.05" width="0.9" height="0.8" fill="#c5c5c5"/><rect x="3" y="226.20" width="0.9" height="0.8" fill="#c5c5c5"/><rect x="3" y="231.35" width="0.9" height="0.8" fill="#c5c5c5"/><rect x="3" y="241.65" width="0.9" height="0.8" fill="#c5c5c5"/><rect x="3" y="246.80" width="0.9" height="0.8" fill="#c5c5c5"/><rect x="3" y="251.95" width="0.9" height="0.8" fill="#c5c5c5"/><rect x="2.2" y="257.05" width="2.6" height="0.9" fill="#a8a8a8"/><rect x="3" y="262.25" width="0.9" height="0.8" fill="#c5c5c5"/><rect x="3" y="267.40" width="0.9" height="0.8" fill="#c5c5c5"/><rect x="3" y="272.55" width="0.9" height="0.8" fill="#c5c5c5"/><rect x="3" y="282.85" width="0.9" height="0.8" fill="#c5c5c5"/><rect x="3" y="288.00" width="0.9" height="0.8" fill="#c5c5c5"/><rect x="3" y="293.15" width="0.9" height="0.8" fill="#c5c5c5"/><rect x="2.2" y="298.25" width="2.6" height="0.9" fill="#a8a8a8"/><rect x="3" y="303.45" width="0.9" height="0.8" fill="#c5c5c5"/></svg>
<div class="a" style="left:130.00px;top:87.00px;width:1.00px;height:359.00px;background:#d2d2d2;"></div>
<div class="a" style="left:19px;top:95.5px;width:101.5px;height:59.5px;background:#fff;border:2px solid #913a2f;box-shadow:0 0 0 0.6px #f3c9c0"></div>
<div class="t" style="left:9.00px;top:97.08px;font-size:7.00px;color:#777;">1</div>
<svg class="a" style="left:85.00px;top:160.00px;" width="7" height="10" viewBox="0 0 7 10"><path d="M0.7 0.7v7.6l1.9-1.7 1.3 3 1.2-.5-1.3-2.9h2.7z" fill="#fff" stroke="#333" stroke-width="0.8"/></svg>
<div class="a" style="left:220.00px;top:107.50px;width:549.00px;height:309.50px;background:#ffffff;"></div>
<div class="a" style="left:288.5px;top:157.5px;width:412.5px;height:109px;border:1px solid #dcdcdc"></div>
<div class="a" style="left:288.5px;top:269px;width:412.5px;height:76.5px;border:1px solid #dcdcdc"></div>
<div class="t" style="left:383.30px;top:230.15px;font-size:30.80px;color:#1a1a1a;transform:scaleX(0.964);-webkit-text-stroke:0.32px #ffffff;">Click</div>
<div class="t" style="left:453.40px;top:230.15px;font-size:30.80px;color:#1a1a1a;transform:scaleX(1.137);-webkit-text-stroke:0.32px #ffffff;">to</div>
<div class="t" style="left:491.20px;top:230.15px;font-size:30.80px;color:#1a1a1a;transform:scaleX(0.979);-webkit-text-stroke:0.32px #ffffff;">add</div>
<div class="t" style="left:550.20px;top:230.15px;font-size:30.80px;color:#1a1a1a;transform:scaleX(1.152);-webkit-text-stroke:0.32px #ffffff;">title</div>
<div class="t" style="left:439.50px;top:273.09px;font-size:12.30px;color:#2e2e2e;transform:scaleX(1.027);-webkit-text-stroke:0.25px #2e2e2e;">Click to add subtitle</div>
<div class="a" style="left:131.00px;top:425.00px;width:721.00px;height:1.00px;background:#d3d3d3;"></div>
<div class="t" style="left:137.00px;top:431.05px;font-size:8.50px;color:#7a7a7a;transform:scaleX(0.947);">Click to add notes</div>
<div class="a" style="left:0.00px;top:446.60px;width:854.00px;height:11.00px;background:#f4f4f4;"></div>
<div class="t" style="left:8.00px;top:449.07px;font-size:6.00px;color:#5a5a5a;transform:scaleX(0.966);">Slide 1 of 1</div>
<svg class="a" style="left:48.00px;top:448.00px;" width="8" height="6.5" viewBox="0 0 8 6.5"><path d="M5.5 0.5H0.5V6H7.5V3" fill="none" stroke="#8a8a8a" stroke-width="0.8"/><path d="M2 3.5l1.4 1.5L7.6 0.6" fill="none" stroke="#777" stroke-width="0.9"/></svg>
<div class="t" style="left:65.00px;top:449.07px;font-size:6.00px;color:#5a5a5a;transform:scaleX(0.945);">English (United States)</div>
<svg class="a" style="left:132.00px;top:448.00px;" width="9" height="8" viewBox="0 0 9 8"><path d="M5.8 1.6A3.2 3.2 0 1 0 3.6 7.4" fill="none" stroke="#666" stroke-width="1"/><path d="M4.2 4.8l1.6 1.8 2.8-3.2" fill="none" stroke="#555" stroke-width="1.1"/><circle cx="3.8" cy="1.6" r="0.8" fill="#666"/></svg>
<div class="t" style="left:142.00px;top:449.07px;font-size:6.00px;color:#5a5a5a;transform:scaleX(0.974);">Accessibility: Good to go</div>
<svg class="a" style="left:572.00px;top:448.00px;" width="8" height="8" viewBox="0 0 8 8"><path d="M4 0.8L7 6H1z" fill="none" stroke="#888" stroke-width="0.8"/><path d="M1 7h6" stroke="#888" stroke-width="0.8"/></svg>
<div class="t" style="left:581.00px;top:449.07px;font-size:6.00px;color:#5a5a5a;transform:scaleX(0.983);">Notes</div>
<svg class="a" style="left:607.50px;top:447.50px;" width="10" height="8" viewBox="0 0 10 8"><path d="M0.5 0.5h9v5.5H4L2 8V6H0.5z" fill="#666"/></svg>
<div class="t" style="left:617.50px;top:449.07px;font-size:6.00px;color:#5a5a5a;transform:scaleX(0.914);">Comments</div>
<div class="a" style="left:655.80px;top:446.60px;width:21.00px;height:11.00px;background:#c9c9c9;"></div>
<svg class="a" style="left:661.50px;top:448.00px;" width="9" height="7" viewBox="0 0 9 7"><rect x="0.5" y="0.5" width="8" height="6" fill="none" stroke="#999" stroke-width="0.8"/><rect x="0.5" y="0.5" width="3" height="6" fill="#aaa"/></svg>
<svg class="a" style="left:684.00px;top:448.00px;" width="8" height="7" viewBox="0 0 8 7"><rect x="0.3" y="0.3" width="3.2" height="2.6" fill="none" stroke="#999" stroke-width="0.6"/><rect x="4.5" y="0.3" width="3.2" height="2.6" fill="none" stroke="#999" stroke-width="0.6"/><rect x="0.3" y="4" width="3.2" height="2.6" fill="none" stroke="#999" stroke-width="0.6"/><rect x="4.5" y="4" width="3.2" height="2.6" fill="none" stroke="#999" stroke-width="0.6"/></svg>
<svg class="a" style="left:706.00px;top:448.00px;" width="9" height="7" viewBox="0 0 9 7"><rect x="0.5" y="0.5" width="8" height="6" fill="none" stroke="#999" stroke-width="0.7"/><path d="M4.5 0.5v6" stroke="#999" stroke-width="0.7"/></svg>
<svg class="a" style="left:727.50px;top:448.00px;" width="7" height="8" viewBox="0 0 7 8"><rect x="0.5" y="0.5" width="6" height="4.5" fill="none" stroke="#888" stroke-width="0.7"/><path d="M3.5 5v2.5" stroke="#888" stroke-width="0.7"/></svg>
<div class="a" style="left:746.50px;top:451.50px;width:2.00px;height:0.80px;background:#777;"></div>
<div class="a" style="left:750.00px;top:451.70px;width:61.00px;height:0.70px;background:#8a8a8a;"></div>
<div class="a" style="left:773.50px;top:448.60px;width:3.00px;height:6.80px;background:#3a3a3a;"></div>
<svg class="a" style="left:811.50px;top:449.50px;" width="5" height="5" viewBox="0 0 5 5"><path d="M2.5 0.5v4M0.5 2.5h4" stroke="#777" stroke-width="0.8"/></svg>
<div class="t" style="left:825.60px;top:449.31px;font-size:5.50px;color:#5a5a5a;transform:scaleX(0.763);">78%</div>
<svg class="a" style="left:841.50px;top:448.50px;" width="7" height="7" viewBox="0 0 7 7"><rect x="0.5" y="0.5" width="7" height="7" fill="none" stroke="#888" stroke-width="0.7"/><path d="M1.5 1.5l2 2M6.5 1.5l-2 2M1.5 6.5l2-2M6.5 6.5l-2-2" stroke="#888" stroke-width="0.7"/></svg>
<div class="a" style="left:0.00px;top:457.50px;width:854.00px;height:22.50px;background:#1d1d1e;"></div>
<div class="a" style="left:0.00px;top:457.50px;width:854.00px;height:1.50px;background:#151515;"></div>
<div class="a" style="left:0.00px;top:479.00px;width:854.00px;height:1.00px;background:#101010;"></div>
<div class="a" style="left:221.00px;top:457.50px;width:27.00px;height:22.50px;background:#434343;"></div>
<div class="a" style="left:140.00px;top:478.30px;width:23.00px;height:1.70px;background:#9a9fa6;"></div>
<div class="a" style="left:221.00px;top:478.30px;width:27.00px;height:1.70px;background:#a3a8ae;"></div>
<svg class="a" style="left:10.20px;top:464.00px;" width="10" height="10" viewBox="0 0 10 10"><path d="M0.3 1.4L4.2 0.9V4.5H0.3zM4.9 0.8L9.6 0.2V4.5H4.9zM0.3 5.2H4.2V8.9L0.3 8.4zM4.9 5.2H9.6V9.6L4.9 9z" fill="#f2f2f2"/></svg>
<svg class="a" style="left:35.00px;top:462.00px;" width="12" height="13" viewBox="0 0 12 13"><circle cx="7" cy="5" r="4" fill="none" stroke="#f2f2f2" stroke-width="1.4"/><path d="M4.2 7.8L0.8 11.5" stroke="#f2f2f2" stroke-width="1.6"/></svg>
<svg class="a" style="left:63.00px;top:463.00px;" width="11" height="11" viewBox="0 0 11 11"><rect x="0.7" y="2.7" width="6" height="5.6" fill="none" stroke="#e8e8e8" stroke-width="1"/><path d="M0.5 0.8h6.5M0.5 10.2h6.5M9.5 1v9" stroke="#e8e8e8" stroke-width="1"/></svg>
<svg class="a" style="left:89.50px;top:462.00px;" width="15" height="13" viewBox="0 0 15 13"><path d="M1 4.5L7.5 0.6 14 4.5V12.5H1z" fill="#2e86d8"/><path d="M1 4.5L7.5 8.5 14 4.5" fill="none" stroke="#bfe0ff" stroke-width="0.9"/><rect x="1" y="7" width="13" height="5.5" fill="#3aa0ef"/></svg>
<svg class="a" style="left:117.00px;top:461.00px;" width="13" height="15" viewBox="0 0 13 15"><ellipse cx="6.5" cy="4.5" rx="5.5" ry="3.3" fill="#e9e3ee" transform="rotate(-20 6.5 4.5)"/><circle cx="4" cy="4.5" r="1" fill="#c44"/><circle cx="6.5" cy="3" r="1" fill="#b46"/><path d="M7 6v7M4.5 9.5h5" stroke="#4a8fd9" stroke-width="1.5"/></svg>
<svg class="a" style="left:144.00px;top:462.00px;" width="15" height="15" viewBox="0 0 15 15"><circle cx="7.5" cy="7.5" r="7.2" fill="#d9463b"/><path d="M7.5 7.5L1.3 11.1A7.2 7.2 0 0 0 9.5 14.4z" fill="#36a852"/><path d="M7.5 7.5L14.5 6A7.2 7.2 0 0 1 9.5 14.4z" fill="#f6c02c"/><circle cx="7.5" cy="7.5" r="3.4" fill="#fff"/><circle cx="7.5" cy="7.5" r="2.6" fill="#3f7fe8"/></svg>
<svg class="a" style="left:172.50px;top:463.00px;" width="13" height="12" viewBox="0 0 13 12"><path d="M0.5 1.5h4.5l1 1.3h6.5V11.5H0.5z" fill="#e6b84a"/><rect x="0.5" y="4" width="12" height="7.5" fill="#f3cd5e"/><rect x="3" y="6.5" width="7" height="2.5" fill="#3b8ad8"/></svg>
<svg class="a" style="left:199.50px;top:462.00px;" width="14" height="14" viewBox="0 0 14 14"><circle cx="7" cy="7" r="6.8" fill="#1d5e8e"/><circle cx="7" cy="7" r="5.6" fill="#2f79ad"/><path d="M3.8 4.8L6.3 10 10.8 3.2" fill="none" stroke="#fff" stroke-width="1.5"/></svg>
<svg class="a" style="left:226.50px;top:461.50px;" width="15" height="15" viewBox="0 0 15 15"><circle cx="8.5" cy="7.5" r="6.2" fill="#e8693f"/><path d="M8.5 1.3A6.2 6.2 0 0 1 14.7 7.5H8.5z" fill="#f3a37a"/><rect x="1" y="4.5" width="7" height="6.5" rx="0.8" fill="#c4381b"/><text x="2.3" y="10" font-size="6" font-weight="bold" fill="#fff" font-family="Liberation Sans">P</text></svg>
<svg class="a" style="left:683.00px;top:464.00px;" width="15" height="9" viewBox="0 0 15 9"><rect x="0.5" y="0.5" width="14" height="8" rx="1" fill="#9a9a9a"/><rect x="2" y="2" width="4" height="5" fill="#3b3b3b"/><rect x="10" y="1.5" width="3.5" height="6" fill="#bcbcbc"/></svg>
<svg class="a" style="left:713.00px;top:466.00px;" width="9" height="6" viewBox="0 0 9 6"><path d="M0.8 5L4.5 1.2 8.2 5" fill="none" stroke="#e0e0e0" stroke-width="1.2"/></svg>
<svg class="a" style="left:731.00px;top:463.00px;" width="7" height="11" viewBox="0 0 7 11"><rect x="1.5" y="0.5" width="4" height="7" rx="2" fill="#e8e8e8"/><path d="M3.5 8v2.5M1 10.5h5" stroke="#e8e8e8" stroke-width="1"/></svg>
<svg class="a" style="left:750.00px;top:463.00px;" width="10" height="11" viewBox="0 0 10 11"><path d="M1 9.5c-1-1 0-3 1.5-3.5s2.5-.5 3-2S8 .5 9 1.5" fill="none" stroke="#d8d8d8" stroke-width="1.2"/><circle cx="3" cy="8" r="1.4" fill="none" stroke="#d8d8d8" stroke-width="1"/><circle cx="6.5" cy="4" r="1.4" fill="none" stroke="#d8d8d8" stroke-width="1"/></svg>
<svg class="a" style="left:773.00px;top:465.00px;" width="6" height="7" viewBox="0 0 6 7"><path d="M0.8 0.5v6M1 6.5h4.5M3 3.5v3" stroke="#d8d8d8" stroke-width="1"/></svg>
<div class="t" style="left:791.00px;top:460.42px;font-size:6.50px;color:#ececec;transform:scaleX(0.988);">11:37 PM</div>
<div class="t" style="left:791.00px;top:470.82px;font-size:6.50px;color:#ececec;transform:scaleX(1.067);">2/7/2025</div>
<svg class="a" style="left:829.00px;top:463.00px;" width="11" height="10" viewBox="0 0 11 10"><path d="M0.8 0.8h9.4v6.4H6l-2 2.2V7.2H0.8z" fill="#f0f0f0"/><path d="M2.5 3h6M2.5 5h6" stroke="#1b1b1b" stroke-width="0.6"/></svg>
<svg class="a" style="left:0;top:0;filter:drop-shadow(0 0 0.8px rgba(0,0,0,0.28))" width="854" height="480" viewBox="0 0 854 480"><g fill="none" stroke="#fff" stroke-width="6" opacity="0.93"><path d="M701.2 424V453.6"/><path d="M710.2 432.5V453.6M710.2 443a7.9 7.9 0 0 1 15.8 0V453.6"/><path d="M744.6 430C742.6 427.6 740.6 426.8 738.6 426.8C735.3 426.8 733.3 429 733.3 431.6C733.3 435 736.6 436.6 739 437.8C742.3 439.4 744.6 441.2 744.6 445C744.6 448.4 741.9 450.6 738.6 450.6C736 450.6 733.6 449.6 732.2 447"/><path d="M752.8 423.5V453.6M752.8 445.4a8.2 8.2 0 0 1 16.4 0V453.6"/><ellipse cx="791.8" cy="438.4" rx="14.8" ry="13.1"/><path d="M815.6 424.5V445.5C815.6 449 817.8 450.6 821 450.6H825.2M810.8 437.7H825.6"/></g></svg>
<div class="a" style="left:0.00px;top:0.00px;width:2.00px;height:480.00px;background:#0b0b0b;z-index:50;"></div>
<div class="a" style="left:852.00px;top:0.00px;width:2.00px;height:480.00px;background:#0b0b0b;z-index:50;"></div>
</div></body></html>
